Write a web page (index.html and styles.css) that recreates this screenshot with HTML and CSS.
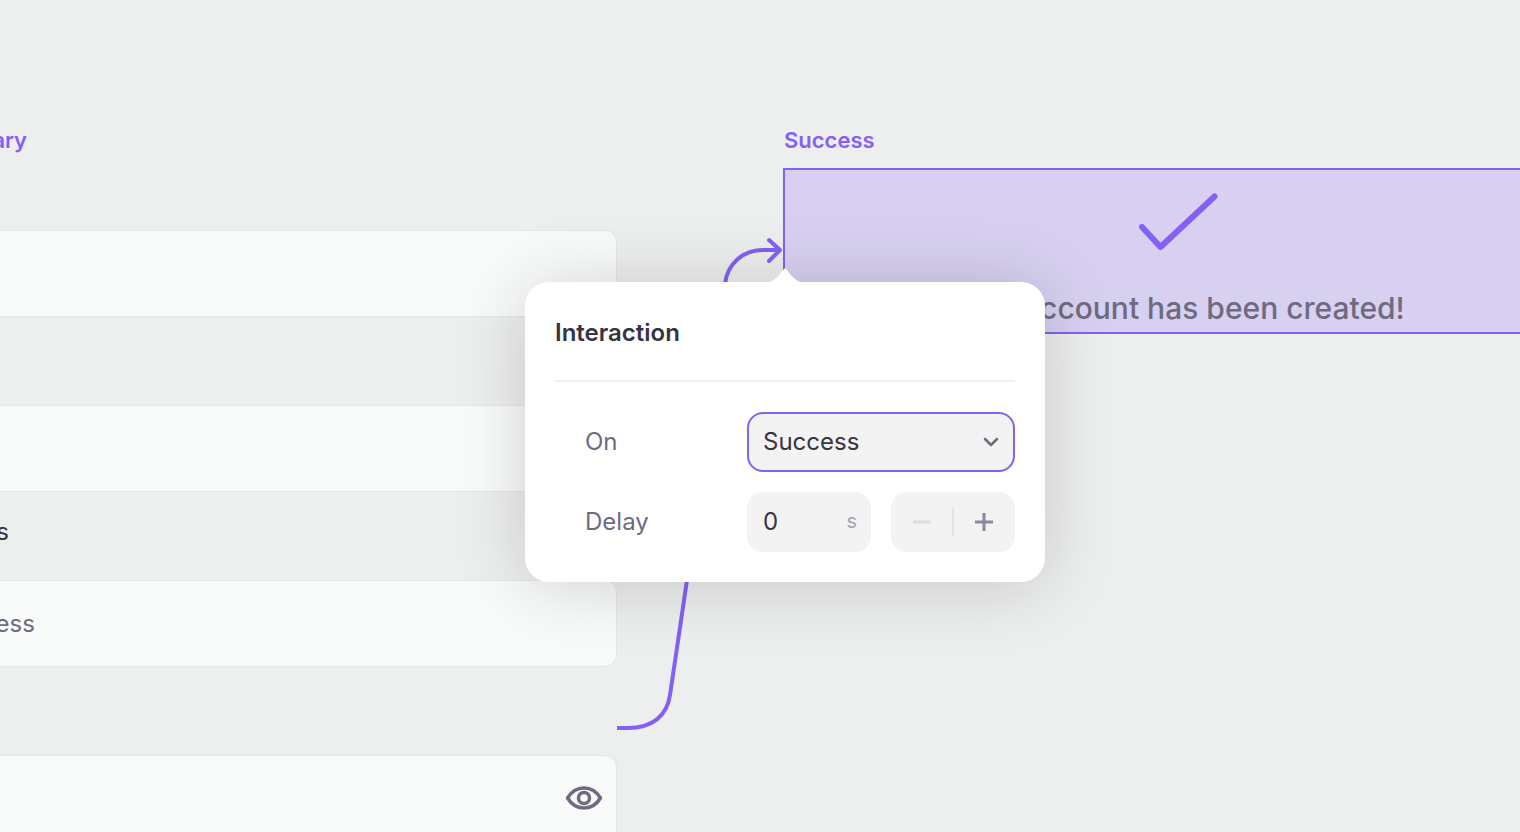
FILE: index.html
```html
<!DOCTYPE html>
<html lang="en">

<head>
    <meta charset="UTF-8">
    <title>Interaction</title>
    <link rel="stylesheet" href="styles.css">
</head>

<body>

    <div class="canvas">
        <div class="form-frame">
            <div class="frame-label form-label">Summary</div>
            <div class="field"></div>
            <div class="field-gap"></div>
            <div class="field"></div>
            <div class="field-gap field-gap-text"><span>Address</span></div>
            <div class="field field-hint"><span>Address</span></div>
            <div class="field-gap"></div>
            <div class="field field-last">
                <svg class="eye" width="38" height="26" viewBox="0 0 38 26" fill="none" stroke="#6f6a80" stroke-width="3.500">
                    <path d="M2.500 13C6.500 6.500 12 3 19 3s12.500 3.500 16.500 10C31.500 19.500 26 23 19 23S6.500 19.500 2.500 13Z" stroke-linejoin="round" />
                    <circle cx="19" cy="13" r="5.500" />
                </svg>
            </div>
        </div>

        <div class="success-frame">
            <div class="frame-label">Success</div>
            <div class="success-box">
                <svg class="check" width="80" height="58" viewBox="0 0 80 58" fill="none" stroke="#8560f5" stroke-width="6" stroke-linecap="round" stroke-linejoin="round">
                    <path d="M3 34 21.500 54 75.500 3.500" />
                </svg>
                <p>Your account has been created!</p>
            </div>
        </div>

        <svg class="wires" width="1520" height="832" viewBox="0 0 1520 832" fill="none" stroke="#8560f5" stroke-width="4">
            <path d="M725 284C727 264 743 250 763 250H780" />
            <path d="M769 240 780 250 769 261" stroke-linecap="round" stroke-linejoin="round" />
            <path d="M617 728H628C652 728 667 716 670 695L687 580" />
        </svg>

        <div class="popover">
            <svg class="popover-notch" width="36" height="16" viewBox="0 0 36 16" fill="#fff">
                <path d="M0 16C8 14 12 8 16.500 2.500C17.500 1.300 18.500 1.300 19.500 2.500C24 8 28 14 36 16Z" />
            </svg>
            <h2>Interaction</h2>
            <div class="popover-rows">
                <div class="row">
                    <label>On</label>
                    <div class="select">
                        <span>Success</span>
                        <svg width="16" height="10" viewBox="0 0 16 10" fill="none" stroke="#6f6a80" stroke-width="2.500" stroke-linecap="round" stroke-linejoin="round">
                            <path d="M2 2 8 8 14 2" />
                        </svg>
                    </div>
                </div>
                <div class="row">
                    <label>Delay</label>
                    <div class="delay">
                        <div class="number"><span>0</span><small>s</small></div>
                        <div class="stepper">
                            <svg width="20" height="20" viewBox="0 0 20 20" fill="none" stroke="#dddce2" stroke-width="3">
                                <path d="M1 10H19" />
                            </svg>
                            <i></i>
                            <svg width="20" height="20" viewBox="0 0 20 20" fill="none" stroke="#8d889c" stroke-width="3">
                                <path d="M1 10H19M10 1V19" />
                            </svg>
                        </div>
                    </div>
                </div>
            </div>
        </div>
    </div>

</body>

</html>
```

FILE: styles.css
```css
html,
body {
    height: 100%;
    margin: 0;
    font-family: Inter, "Liberation Sans", sans-serif;
    background: #edeeee;
}

.canvas {
    position: relative;
    width: 1520px;
    height: 832px;
    overflow: hidden;
}

.frame-label {
    font-size: 22px;
    line-height: 24px;
    font-weight: 600;
    color: #8560f5;
}

/* the form frame runs off the left edge */
.form-frame {
    position: absolute;
    left: -400px;
    top: 128px;
    width: 1017px;
}

.form-label {
    margin-left: 325px;
    height: 102px;
}

.field {
    height: 85px;
    background: #f9fbfa;
    border: 1px solid #e5e6e6;
    border-radius: 12px;
    display: flex;
    align-items: center;
    justify-content: flex-end;
}

.field-hint {
    justify-content: flex-start;
    font-size: 24px;
    color: #6f6a80;
}

.field-hint span {
    margin-left: 340px;
}

.field-gap {
    height: 88px;
}

.field-gap-text {
    display: flex;
    align-items: center;
    font-size: 24px;
    color: #37343f;
}

.field-gap-text span {
    margin-left: 315px;
    margin-bottom: 10px;
}

.eye {
    margin-right: 13px;
    margin-bottom: 2px;
}

.success-frame {
    position: absolute;
    left: 783px;
    top: 128px;
    width: 800px;
}

.success-frame .frame-label {
    margin-left: 1px;
    margin-bottom: 16px;
}

.success-box {
    height: 162px;
    background: #d7d0f0;
    border: 2px solid #8560f5;
    position: relative;
}

.check {
    position: absolute;
    left: 354px;
    top: 23px;
}

.success-box p {
    position: absolute;
    left: 164px;
    top: 120px;
    margin: 0;
    font-size: 30px;
    line-height: 36px;
    font-weight: 500;
    white-space: nowrap;
    color: #6f6a80;
}

.wires {
    position: absolute;
    left: 0;
    top: 0;
}

.popover {
    position: absolute;
    left: 525px;
    top: 282px;
    width: 520px;
    height: 300px;
    box-sizing: border-box;
    padding: 33px 30px 30px;
    background: #fff;
    border-radius: 24px;
    box-shadow: 0 4px 70px rgba(0, 0, 0, 0.17);
}

.popover-notch {
    position: absolute;
    left: 242px;
    top: -15px;
}

h2 {
    margin: 0;
    padding-bottom: 29px;
    font-size: 24px;
    line-height: 36px;
    font-weight: 600;
    color: #37343f;
    border-bottom: 2px solid #efefef;
}

.popover-rows {
    margin-top: 30px;
    display: flex;
    flex-direction: column;
    gap: 20px;
}

.row {
    display: flex;
    align-items: center;
    justify-content: space-between;
}

.row label {
    margin-left: 30px;
    margin-bottom: 2px;
    font-size: 24px;
    color: #6f6a80;
}

.select {
    width: 268px;
    height: 60px;
    box-sizing: border-box;
    padding: 0 14px;
    display: flex;
    align-items: center;
    justify-content: space-between;
    background: #f3f3f4;
    border: 2px solid #8560f5;
    border-radius: 16px;
    font-size: 24px;
    color: #37343f;
}

.select span,
.number span {
    margin-bottom: 2px;
}

.delay {
    display: flex;
    gap: 20px;
}

.number {
    width: 124px;
    height: 60px;
    box-sizing: border-box;
    padding: 0 14px 0 16px;
    display: flex;
    align-items: center;
    justify-content: space-between;
    background: #f3f3f4;
    border-radius: 16px;
    font-size: 24px;
    color: #37343f;
}

.number small {
    margin-bottom: 2px;
    font-size: 20px;
    color: #a5a2b0;
}

.stepper {
    width: 124px;
    height: 60px;
    display: flex;
    align-items: center;
    justify-content: center;
    gap: 20px;
    background: #f3f3f4;
    border-radius: 16px;
}

.stepper i {
    width: 2px;
    height: 28px;
    background: #e4e4e7;
}
```
